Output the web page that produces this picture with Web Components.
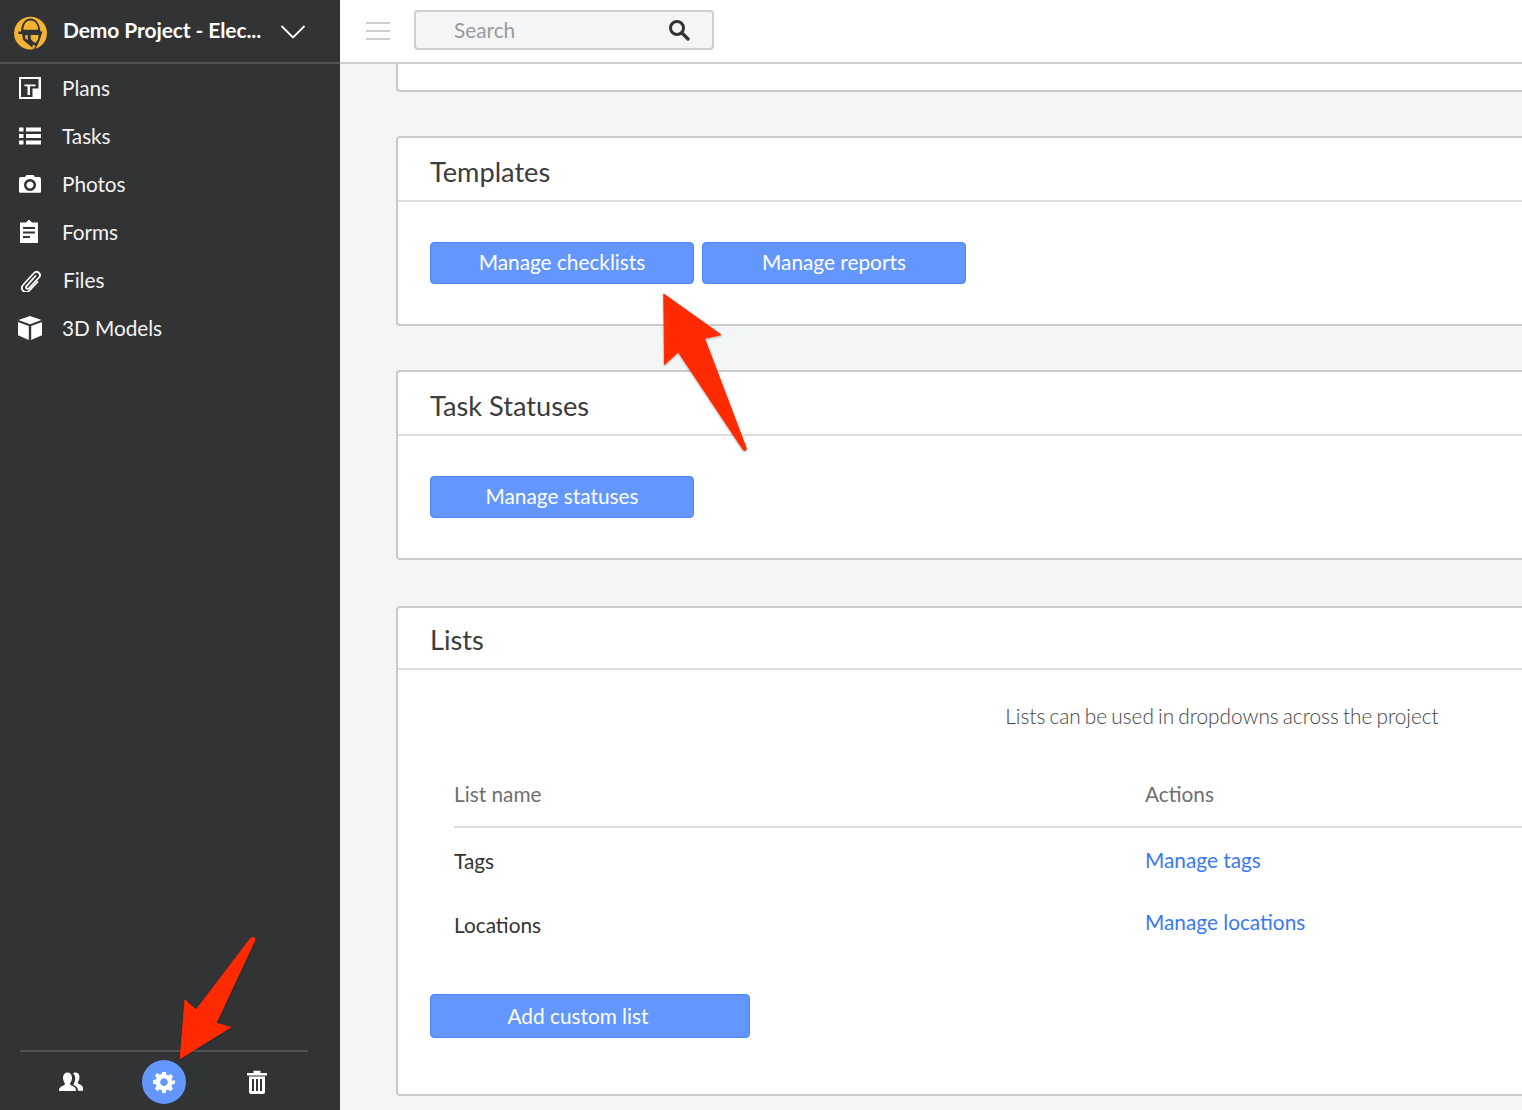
<!DOCTYPE html>
<html lang="en"><head><meta charset="utf-8"><title>Project settings</title>
<style>
html,body{margin:0;padding:0;height:1110px;overflow:hidden;background:#f4f5f7;font-family:Lato,"Liberation Sans",sans-serif}
</style></head><body>
<app-shell>
  <side-bar slot="side">
    <nav-item label="Plans" icon="plans"></nav-item>
    <nav-item label="Tasks" icon="tasks"></nav-item>
    <nav-item label="Photos" icon="photos"></nav-item>
    <nav-item label="Forms" icon="forms"></nav-item>
    <nav-item label="Files" icon="files" shift="1"></nav-item>
    <nav-item label="3D Models" icon="models"></nav-item>
  </side-bar>
  <top-bar slot="top"></top-bar>
  <setting-card class="stub"></setting-card>
  <setting-card heading="Templates" style="--gap-top:44px">
    <div style="display:flex;gap:8px">
      <ui-button style="width:264px">Manage checklists</ui-button>
      <ui-button style="width:264px">Manage reports</ui-button>
    </div>
  </setting-card>
  <setting-card heading="Task Statuses" style="--gap-top:44px">
    <ui-button style="width:264px">Manage statuses</ui-button>
  </setting-card>
  <setting-card heading="Lists" style="--gap-top:46px;--head-h:62px;--head-pad:3px;--body-pad:0 32px 56px">
    <lists-panel></lists-panel>
  </setting-card>
  <red-arrows slot="over"></red-arrows>
</app-shell>
<script>
const icons={
plans:'<svg width="24" height="24" viewBox="0 0 24 24"><path fill="#fff" d="M1 1h22v22H1z"/><path fill="#323335" d="M3 3h17.500v9.500H14.500V21H3z"/><path fill="#fff" d="M6.500 8.500H17.500v1.700H12V19H9.500v-8.800H6.500z"/></svg>',
tasks:'<svg width="24" height="24" viewBox="0 0 24 24"><path fill="#fff" d="M1 3.500h4.500v4H1zM1 10h4.500v4H1zM1 16.500h4.500v4H1zM8 3.500h15v4H8zM8 10h15v4H8zM8 16.500h15v4H8z"/></svg>',
photos:'<svg width="24" height="24" viewBox="0 0 24 24"><path fill="#fff" fill-rule="evenodd" d="M1 7q0-2 2-2h4l1.500-2h7L17 5h4q2 0 2 2v12.700q0 1-1 1H2q-1 0-1-1zM12 7a6 6 0 1 0 .01 0zM12 9.500a3.500 3.500 0 1 1-.01 0z"/></svg>',
forms:'<svg width="24" height="24" viewBox="0 2 24 24"><path fill="#fff" fill-rule="evenodd" d="M2 4.500H8L11 1.500l3 3h6V25H2zM5 9v2h12V9zM5 13.500v2h12v-2zM5 18v2h7v-2z"/></svg>',
files:'<svg width="24" height="24" viewBox="0 0 24 24"><path fill="none" stroke="#fff" stroke-width="1.800" stroke-linecap="round" d="M17.500 8 8.500 18.200c-1.500 1.700 1 3.600 2.600 2L21 9.500c3-3.400-2-7.800-5-4.500L5 17c-4 4.500 2.700 9.500 6.500 5.500l8-8.500"/></svg>',
models:'<svg width="26" height="26" viewBox="1 0 26 26"><path fill="#fff" d="M13 1 24.500 5 13 9.300 1.500 5zM1 7l10.800 4v14L1 20.300zM25 7 14.200 11v14L25 20.300z"/></svg>',
};
function def(name,html){customElements.define(name,class extends HTMLElement{connectedCallback(){if(this.shadowRoot)return;const r=this.attachShadow({mode:'open'});r.innerHTML=typeof html==='function'?html(this):html;}});}

def('app-shell',`<style>
:host{display:grid;grid-template-columns:340px 1fr;height:1110px;width:1522px;position:relative;overflow:hidden}
.side{grid-row:1}
.right{display:flex;flex-direction:column;height:1110px;min-width:0;overflow:hidden}
.content{flex:1;padding:0 0 0 56px;overflow:hidden;min-width:0}
.over{position:absolute;inset:0;pointer-events:none}
</style>
<div class="side"><slot name="side"></slot></div>
<div class="right"><slot name="top"></slot><div class="content"><slot></slot></div></div>
<div class="over"><slot name="over"></slot></div>`);

def('side-bar',`<style>
:host{display:flex;flex-direction:column;height:1110px;background:#323335;color:#fff;font-family:Lato,sans-serif}
header{height:62px;border-bottom:2px solid #515254;display:flex;align-items:center;padding-left:14px}
.logo{margin-top:5px;flex:none}
.name{font-size:21px;font-weight:700;color:#fff;margin:0 0 4px 16px;width:217px;white-space:nowrap;letter-spacing:-.1px}
.chev{margin-top:2px}
nav{display:flex;flex-direction:column;flex:1}
footer{margin:0 32px 6px 20px;border-top:2px solid #515254;height:52px;display:flex;align-items:center;position:relative}
.b{position:absolute;top:8px;display:flex;align-items:center;justify-content:center;width:44px;height:44px}
.gear{background:#6397fd;border-radius:50%}
</style>
<header>
<svg class="logo" width="33" height="35" viewBox="0 0 33 35"><circle cx="16.500" cy="17.200" r="16.400" fill="#f6b332"/>
<path fill="#323335" d="M4.300 15.500H7C7.500 7.500 11 2.500 16.500 2.500S25.500 7.500 26.500 15.500h2l-3 9L21.500 33l-2 .5-2-2.500-8.300-7L8 18H4.300z"/>
<path fill="#f6b332" d="M9.300 13.700C9.800 7.500 12.500 4.500 16.500 4.500S23.600 7.500 24.300 13.700zM16.700 19H24.500L24 23.500 21.500 27 19 25.500 16.700 23zM11 19.300h2.800V24L11.500 22.800zM19 28.500l2.500 1.500-1.800 3.300-1.500-1.500z"/></svg>
<div class="name">Demo Project - Elec...</div>
<svg class="chev" width="26" height="16" viewBox="0 0 26 16"><path d="M1.500 2 13 13.500 24.500 2" fill="none" stroke="#fff" stroke-width="1.800"/></svg>
</header>
<nav><slot></slot></nav>
<footer>
<span class="b" style="left:29px"><svg width="24" height="20" viewBox="0 0 24 20"><path fill="#fff" fill-rule="evenodd" d="M0 18.500c0-3 2-4 4.500-5 1.500-.6 1.800-1.500 1-2.700C4.500 9.200 4 7.500 4 5.500 4 2.500 6 .5 8.500.5s4.500 2 4.500 5c0 2-.5 3.700-1.500 5.300-.8 1.200-.5 2.100 1 2.700 2.500 1 4.500 2 4.500 5v.5H0z"/><path fill="#fff" d="M13.800 1.800C14.300 1 15.200.5 16.500.5c2.300 0 4 1.800 4 4.500 0 2-.5 3.300-1.400 4.700-.6 1-.4 1.800.9 2.300 2 .8 4 1.700 4 4.500v2.300h-5c0-3.500-2-5-4.800-6.100 1.300-2 2-4.200 2-6.700 0-1.600-.5-3-2.400-4.500z"/></svg></span>
<span class="b gear" style="left:122px"><svg width="22" height="22" viewBox="0 0 24 24"><path fill="#fff" fill-rule="evenodd" d="M10 1h4l.6 3.200 1.900.8 2.700-1.800 2.800 2.800-1.800 2.700.8 1.900L24 10v4l-3.200.6-.8 1.900 1.800 2.700-2.800 2.800-2.700-1.800-1.900.8L14 24h-4l-.6-3.200-1.900-.8-2.700 1.800L2 19l1.800-2.700-.8-1.900L0 14v-4l3.200-.6.8-1.900L2 5l2.800-2.800 2.700 1.800 1.900-.8zM12 8a4.200 4.200 0 1 0 .01 0z"/></svg></span>
<span class="b" style="left:215px"><svg width="20" height="24" viewBox="0 0 20 24"><path fill="#fff" fill-rule="evenodd" d="M0 3h6.500V.8h7V3H20v2.500H0zM2 6.500h16V22q0 2-2 2H4q-2 0-2-2zM5 9v12h2V9zM9 9v12h2V9zM13 9v12h2V9z"/></svg></span>
</footer>`);

def('nav-item',el=>`<style>
:host{display:flex;align-items:center;height:48px;color:#f2f2f2;font-size:20.800px;font-family:Lato,sans-serif;font-weight:400}
.i{width:62px;padding-left:18px;box-sizing:border-box;display:flex;align-items:center;height:100%}
span{padding-bottom:2px;letter-spacing:-.05px;${el.getAttribute('shift')?'margin-left:1px;':''}}
</style><div class="i">${icons[el.getAttribute('icon')]}</div><span>${el.getAttribute('label')}</span>`);

def('top-bar',`<style>
:host{display:flex;align-items:center;height:64px;box-sizing:border-box;background:#fff;border-bottom:2px solid #cfcfcf;flex:none;padding-left:26px;font-family:Lato,sans-serif}
.menu{display:flex;flex-direction:column;gap:6px;width:24px;margin-right:24px}
.menu i{display:block;height:2px;background:#cfcfcf}
.search{box-sizing:border-box;width:300px;height:40px;margin-bottom:2px;background:#f4f5f7;border:2px solid #cfcfcf;border-radius:4px;display:flex;align-items:center;justify-content:space-between;padding:0 22px 0 38px;font-size:20.800px;color:#9a9b9d}
.search span{padding-bottom:2px}
</style>
<div class="menu"><i></i><i></i><i></i></div>
<div class="search"><span>Search</span><svg width="22" height="22" viewBox="0 0 22 22"><circle cx="9" cy="9" r="6.500" fill="none" stroke="#333" stroke-width="3"/><path d="m14 14 6 6" stroke="#333" stroke-width="3.400" stroke-linecap="round"/></svg></div>`);

def('setting-card',el=>{
 const h=el.getAttribute('heading');
 if(!h) return `<style>:host{display:block;box-sizing:border-box;width:1660px;height:28px;background:#fff;border:2px solid #cbcbcb;border-top:0;border-radius:0 0 4px 4px}</style>`;
 return `<style>
:host{display:block;box-sizing:border-box;width:1660px;margin-top:var(--gap-top,44px);background:#fff;border:2px solid #cbcbcb;border-radius:4px;font-family:Lato,sans-serif}
h2{margin:0;height:var(--head-h,64px);box-sizing:border-box;padding:var(--head-pad,5px) 32px 0;display:flex;align-items:center;font-size:27.200px;font-weight:400;color:#3b3c3e;border-bottom:2px solid #dedede}
.b{padding:var(--body-pad,40px 32px 40px)}
</style><h2>${h}</h2><div class="b"><slot></slot></div>`;});

def('ui-button',`<style>
:host{display:flex;align-items:center;justify-content:center;box-sizing:border-box;height:42px;padding-bottom:4px;background:#6397fd;border:1px solid #4a86fa;border-radius:4px;color:#fff;font-size:20.800px;font-family:Lato,sans-serif}
</style><slot></slot>`);

def('lists-panel',`<style>
:host{display:block;font-family:Lato,sans-serif;font-size:20.800px}
.note{text-align:center;font-weight:300;color:#444;height:94px;padding-top:33px;box-sizing:border-box;width:1584px;word-spacing:-1.500px}
.t{margin-left:24px;width:1560px;display:grid;grid-template-columns:691px 1fr}
.h{height:64px;display:flex;align-items:flex-start;padding-top:17px;box-sizing:border-box;border-bottom:2px solid #dedede;color:#6f6f71}
.c{height:64px;display:flex;align-items:center;color:#333}
a{color:#3b78f0;text-decoration:none;position:relative}
ui-button{width:320px;height:44px;margin-top:38px;padding-right:24px;padding-bottom:2px}
</style>
<div class="note">Lists can be used in dropdowns across the project</div>
<div class="t">
<div class="h">List name</div><div class="h">Actions</div>
<div class="c">Tags</div><div class="c"><a style="top:-1px">Manage tags</a></div>
<div class="c">Locations</div><div class="c"><a style="top:-3px">Manage locations</a></div>
</div>
<ui-button>Add custom list</ui-button>`);

def('red-arrows',`<style>:host{display:block;width:1522px;height:1110px}svg{display:block}</style>
<svg width="1522" height="1110" viewBox="0 0 1522 1110"><defs><filter id="s" x="-30%" y="-30%" width="160%" height="160%"><feDropShadow dx="0" dy="1" stdDeviation="1" flood-color="#000" flood-opacity=".35"/></filter></defs>
<g fill="#ff2a00" stroke="#ff2a00" stroke-linejoin="round" filter="url(#s)">
<path stroke-width="1" d="M663.800 294 721 334.800 704.500 338.300 746 447.500C747 450.500 744.500 451.500 743 449.500L678.300 352 664.500 364.500Z"/>
<path stroke-width="1" d="M180.300 1058.500 185 1000 196 1010 250 939C253 935.500 256 938 254.500 941L216 1023.300 230.500 1027.300Z"/>
</g></svg>`);
</script>
</body></html>
